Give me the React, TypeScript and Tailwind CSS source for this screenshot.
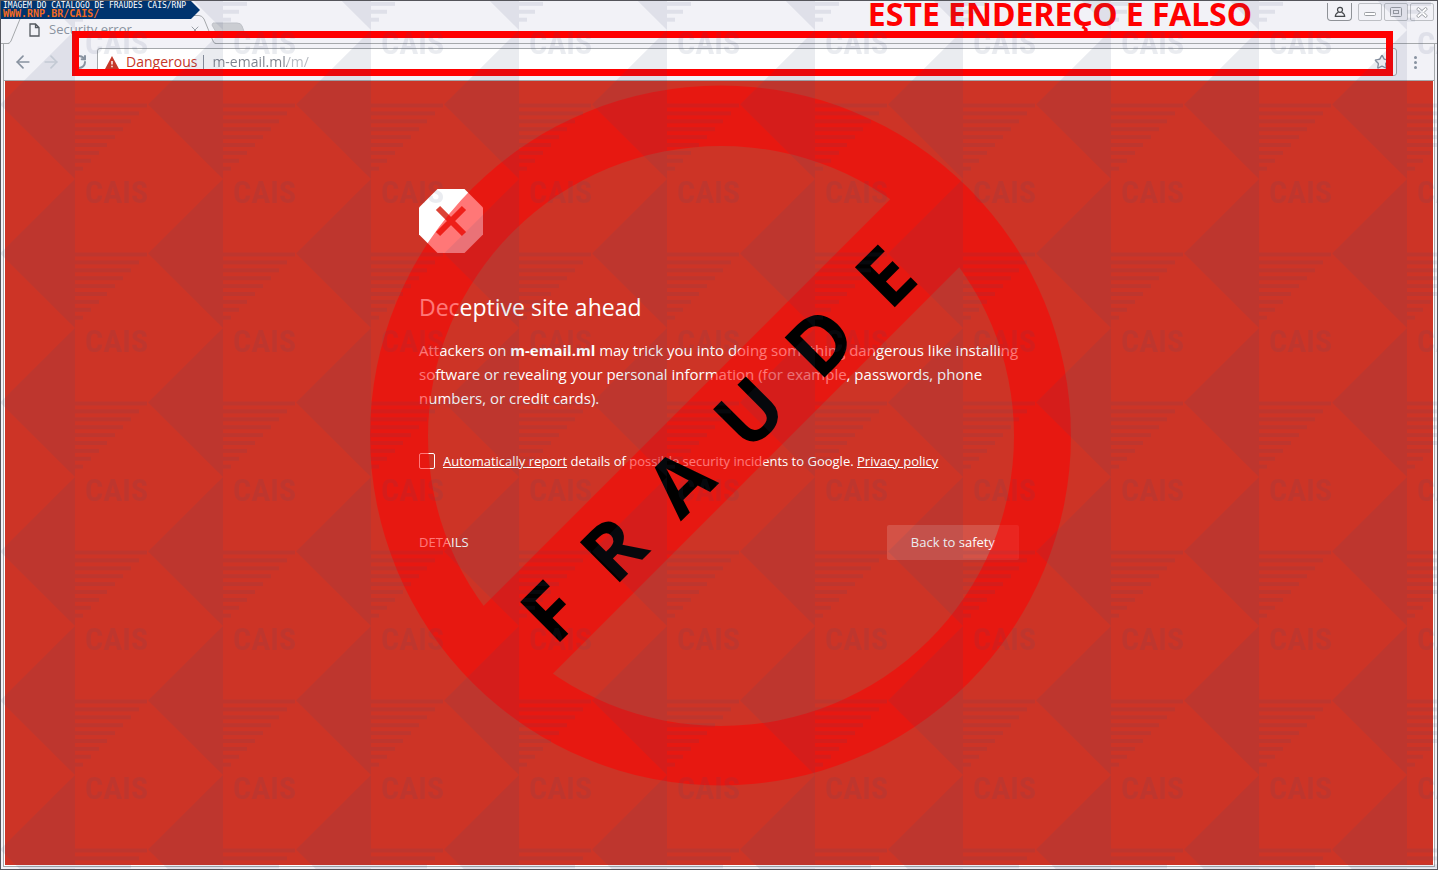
import type React from "react";
import { ArrowLeft, ArrowRight, RefreshCw, Star, X } from "lucide-react";

const STRIPES = [0, 1, 2, 3, 4, 5, 6, 7, 8];

const CatalogBanner: React.FC = () => (
  <div className="absolute left-0 top-0 z-40 h-[18px] w-[199px] bg-[#00346f] pl-[2px] pt-px [clip-path:polygon(0_0,190px_0,199px_9px,190px_100%,0_100%)]">
    <div className="whitespace-nowrap font-['DejaVu_Sans_Mono',monospace] text-[8px] leading-[8px] text-white">
      IMAGEM DO CATÁLOGO DE FRAUDES CAIS/RNP
    </div>
    <div className="whitespace-nowrap font-['DejaVu_Sans_Mono',monospace] text-[10px] font-bold leading-[8px] text-[#f26a21]">
      WWW.RNP.BR/CAIS/
    </div>
  </div>
);

const TabStrip: React.FC = () => (
  <div className="relative flex h-[43px] items-end border-b border-[#a5a8ab]">
    <svg
      className="absolute left-[2px] top-[14px] h-[29px] w-[245px]"
      viewBox="0 0 245 29"
      fill="none"
    >
      <path d="M0 29H6L17 4Q19 1 22 1H196Q200 1 202 5L212 29Z" fill="#f2f2f7" />
      <path d="M0 28.500H5Q7 28 8 26L17 4Q19 .5 22 .5H196Q199 .5 201 4L210 26Q211 28.500 213 28.500" stroke="#a5a8ab" />
      <path d="M210 8H234Q238 8 239 11L242 19Q243 22 240 22H218Q215 22 214 19L209 10Z" fill="#cbcdd2" stroke="#bfc2c8" />
    </svg>
    <div className="relative flex h-[26px] w-[200px] items-center pl-7">
      <svg className="h-[14px] w-[11px]" viewBox="0 0 11 14" fill="none" stroke="#555a60" strokeWidth="1.300">
        <path d="M1 1H6.500L10 4.500V13H1ZM6.500 1V4.500H10" />
      </svg>
      <span className="ml-[9px] flex-1 text-[13px] text-[#8a93a0]">Security error</span>
      <button type="button" aria-label="Close tab">
        <X className="size-3 text-[#9aa0a8]" />
      </button>
    </div>
  </div>
);

const WindowButtons: React.FC = () => (
  <div className="absolute right-[3px] top-[2px] z-10 flex items-start gap-[2px] text-[#9b9ea3]">
    <button type="button" aria-label="Profile" className="mr-1 flex h-[18px] w-[25px] items-center justify-center rounded-b border border-t-0 border-[#8f9297] text-[#44474b]">
      <svg className="h-3 w-3" viewBox="0 0 12 12" fill="none" stroke="currentColor" strokeWidth="1.200">
        <circle cx="6" cy="3.800" r="2.500" />
        <path d="M4.500 6.200Q1.300 7.500 1.300 10.400H10.700Q10.700 7.500 7.500 6.200" />
      </svg>
    </button>
    <button type="button" aria-label="Minimize" className="flex h-[18px] w-6 items-center justify-center rounded-[2px] border border-[#bdbfc4]">
      <svg className="h-[10px] w-3" viewBox="0 0 12 10" fill="none" stroke="currentColor">
        <rect x=".5" y="5.500" width="11" height="3" rx="1" fill="#fff" />
      </svg>
    </button>
    <button type="button" aria-label="Maximize" className="flex h-[18px] w-6 items-center justify-center rounded-[2px] border border-[#bdbfc4]">
      <svg className="h-[10px] w-3" viewBox="0 0 12 10" fill="none" stroke="currentColor">
        <rect x=".5" y=".5" width="11" height="9" rx="1" />
        <rect x="3.500" y="3.500" width="5" height="3" />
      </svg>
    </button>
    <button type="button" aria-label="Close" className="flex h-[18px] w-6 items-center justify-center rounded-[2px] border border-[#bdbfc4]">
      <svg className="h-[11px] w-3" viewBox="0 0 12 11" fill="none" stroke="currentColor">
        <path d="M1 1.500L2.500 .5L6 3.500L9.500 .5L11 1.500V2.500L8 5.500L11 8.500V9.500L9.500 10.500L6 7.500L2.500 10.500L1 9.500V8.500L4 5.500L1 2.500Z" fill="#fff" />
      </svg>
    </button>
  </div>
);

const Toolbar: React.FC = () => (
  <div className="flex h-[37px] items-center border-b border-[#a5a8ab] pl-[9px] pr-[11px]">
    <button type="button" aria-label="Back">
      <ArrowLeft className="size-5 text-[#8892a0]" />
    </button>
    <button type="button" aria-label="Forward" className="ml-2">
      <ArrowRight className="size-5 text-[#d3d8df]" />
    </button>
    <button type="button" aria-label="Reload" className="ml-[10px]">
      <RefreshCw className="size-4 text-[#8892a0]" strokeWidth={3} />
    </button>
    <div className="ml-[10px] flex h-7 flex-1 items-center rounded-[3px] border border-[#a5a8ab] bg-white pl-[7px] pr-[6px]">
      <svg className="h-[13px] w-[14px]" viewBox="0 0 14 13">
        <path d="M7 0L14 13H0Z" fill="#c5392a" />
        <path d="M6.300 5H7.700V8.500H6.300ZM6.300 9.800H7.700V11.200H6.300Z" fill="#fff" />
      </svg>
      <label htmlFor="address" className="ml-[7px] text-sm text-[#c5392a]">
        Dangerous
      </label>
      <span className="ml-[6px] mr-2 h-[15px] w-px bg-[#8a919c]" />
      <input
        id="address"
        type="text"
        defaultValue="m-email.ml/m/"
        className="min-w-0 flex-1 bg-[linear-gradient(90deg,#7c828c_75px,#b4b8bf_75px)] bg-clip-text text-sm text-transparent outline-none"
      />
      <button type="button" aria-label="Bookmark">
        <Star className="size-4 text-[#8892a0]" />
      </button>
    </div>
    <button type="button" aria-label="Menu" className="ml-[10px] flex h-5 w-4 flex-col items-center justify-center gap-[2px]">
      <span className="size-[3px] rounded-full bg-[#8892a0]" />
      <span className="size-[3px] rounded-full bg-[#8892a0]" />
      <span className="size-[3px] rounded-full bg-[#8892a0]" />
    </button>
  </div>
);

const Warning: React.FC = () => (
  <main className="flex-1 bg-[#cd3426] px-6 pt-[108px] text-white">
    <div className="mx-auto max-w-[600px]">
      <svg className="size-16" viewBox="0 0 64 64">
        <path d="M18.500 0H45.500L64 18.500V45.500L45.500 64H18.500L0 45.500V18.500Z" fill="#fff" />
        <path d="M19 19L45 45M45 19L19 45" stroke="#dc4437" strokeWidth="6" />
      </svg>
      <h1 className="mt-[38px] text-[23px] leading-8">Deceptive site ahead</h1>
      <p className="mt-[15px] text-[15px] leading-6">
        Attackers on <strong>m-email.ml</strong> may trick you into doing
        something dangerous like installing software or revealing your personal
        information (for example, passwords, phone numbers, or credit cards).
      </p>
      <div className="mt-[41px] flex items-center text-[13px] leading-5">
        <input
          id="report"
          type="checkbox"
          className="mr-2 size-4 appearance-none rounded-[2px] border border-white"
        />
        <label htmlFor="report">
          <a href="#report" className="underline">Automatically report</a> details of
          possible security incidents to Google.{" "}
          <a href="#privacy" className="underline">Privacy policy</a>
        </label>
      </div>
      <div className="mt-[54px] flex items-center justify-between text-[13px]">
        <button type="button">DETAILS</button>
        <button type="button" className="h-[35px] rounded-[2px] bg-white/15 px-6">
          Back to safety
        </button>
      </div>
    </div>
  </main>
);

const FraudStamp: React.FC = () => (
  <div className="pointer-events-none absolute inset-0 z-20 flex items-center justify-center">
    <svg className="size-[710px] shrink-0" viewBox="364 80 710 710">
      <g opacity=".53" fill="#f00">
        <path
          fillRule="evenodd"
          d="M370 435.500a350.500 350 0 1 0 701 0a350.500 350 0 1 0-701 0ZM428 436a293 290 0 1 0 586 0a293 290 0 1 0-586 0Z"
        />
        <path d="M500 658L940 218" stroke="#f00" strokeWidth="97" />
      </g>
      <text
        x="-65"
        y="850"
        transform="rotate(-45)"
        className="whitespace-pre text-[79px] font-bold"
      >
        {"F  R  A  U  D  E"}
      </text>
    </svg>
  </div>
);

const Watermark: React.FC = () => (
  <svg className="pointer-events-none absolute inset-0 z-30 h-full w-full" opacity=".1">
    <defs>
      <pattern id="cais" x="74" y="29" width="148" height="149" patternUnits="userSpaceOnUse">
        <g fill="#415078">
          <path d="M73 74.500L148 0V149Z" />
          {STRIPES.map((i) => (
            <rect key={i} x="0" y={73.5 + i * 7.9} width={72 - i * 8} height="4" />
          ))}
          <text x="10" y="24" className="font-['Roboto_Condensed','Roboto',sans-serif] text-[32px] font-bold">
            CAIS
          </text>
        </g>
      </pattern>
    </defs>
    <rect width="100%" height="100%" fill="url(#cais)" />
  </svg>
);

const App: React.FC = () => (
  <div className="relative flex min-h-screen flex-col overflow-hidden border border-[#55555b] bg-[#f2f2f7] font-['Open_Sans',sans-serif]">
    <TabStrip />
    <WindowButtons />
    <div className="mx-[2px] mb-[2px] flex flex-1 flex-col border border-t-0 border-[#a5a8ab] bg-white">
      <div className="bg-[#f2f2f7]">
        <Toolbar />
      </div>
      <div className="mx-px mb-px flex flex-1 flex-col">
        <Warning />
      </div>
    </div>
    <div className="pointer-events-none absolute left-[71px] right-11 top-[30px] z-20 h-[45px] border-[7px] border-[#f00]" />
    <div className="absolute right-[185px] top-0 z-20 whitespace-nowrap font-['Noto_Sans',sans-serif] text-[32px] font-bold leading-[26px] text-[#f00]">
      ESTE ENDEREÇO É FALSO
    </div>
    <FraudStamp />
    <Watermark />
    <CatalogBanner />
  </div>
);

export default App;
